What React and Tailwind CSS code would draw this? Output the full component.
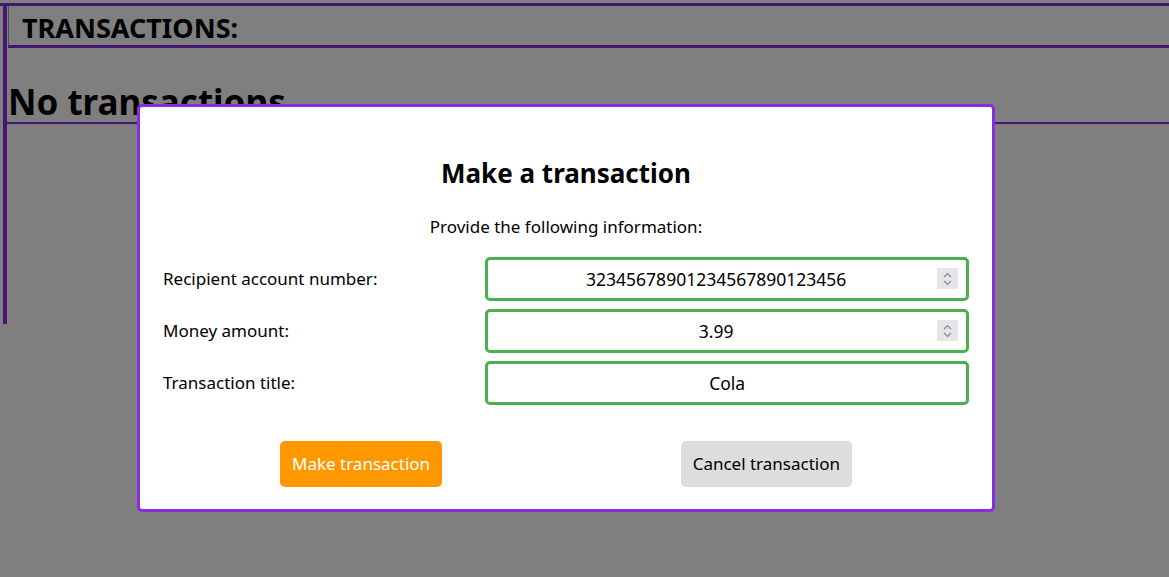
export default function App() {
  const rows = [
    { label: 'Recipient account number:', value: '32345678901234567890123456', spin: true },
    { label: 'Money amount:', value: '3.99', spin: true },
    { label: 'Transaction title:', value: 'Cola', spin: false },
  ];

  return (
    <div className="relative w-[1169px] h-[577px] overflow-hidden bg-white font-['Noto_Sans',sans-serif] text-black">
      {/* Page behind the modal */}
      <div className="border-t-[3px] border-[#8a2be2] mt-[3px]">
        <div className="flex">
          <div className="w-[3px]" />
          <div className="flex-1 border-l-4 border-[#8a2be2] h-[318px]">
            <div className="border-b-[3px] border-[#8a2be2] h-[42px] pl-[13px] ml-px border-l border-l-gray-400">
              <h2 className="text-[27px] font-bold leading-[44px]">TRANSACTIONS:</h2>
            </div>
            <div className="border-b-2 border-[#8a2be2] h-[76px] flex items-end -ml-px">
              <h1 className="text-[35px] font-bold leading-none pl-[2px] mb-[3px]">No transactions</h1>
            </div>
          </div>
        </div>
      </div>

      {/* Overlay */}
      <div className="absolute inset-0 bg-black/50" />

      {/* Modal */}
      <div className="absolute left-[137px] top-[104px] w-[858px] h-[408px] bg-white border-[3px] border-[#8a2be2] rounded-[5px] px-[23px] pt-[48px]">
        <h3 className="text-center text-[26px] font-bold leading-[36px]">Make a transaction</h3>
        <p className="text-center text-[17px] mt-[24px] leading-[24px]">Provide the following information:</p>

        <div className="grid grid-cols-[2fr_3fr] gap-y-[8px] mt-[18px] items-center">
          {rows.map((r) => (
            <div key={r.label} className="contents">
              <span className="text-[17px]">{r.label}</span>
              <div className="relative">
                <input
                  readOnly
                  value={r.value}
                  className={
                    r.spin
                      ? 'w-full h-[44px] border-[3px] border-[#4caf50] rounded-[5px] text-center text-[17.5px] outline-none pl-[2px] pr-[24px]'
                      : 'w-full h-[44px] border-[3px] border-[#4caf50] rounded-[5px] text-center text-[17.5px] outline-none px-[2px]'
                  }
                />
                {r.spin && (
                  <span className="absolute right-[11px] top-[11px] w-[21px] h-[21px] bg-[#e5e5ea] flex flex-col items-center justify-center">
                    <svg width="9" height="16" viewBox="0 0 9 16" fill="none" stroke="#8a8a8a" strokeWidth="1.2">
                      <path d="M1 6 L4.5 2.5 L8 6" />
                      <path d="M1 10 L4.5 13.5 L8 10" />
                    </svg>
                  </span>
                )}
              </div>
            </div>
          ))}
        </div>

        <div className="flex justify-between mt-[36px] px-[117px]">
          <button className="h-[46px] px-[12px] bg-[#ff9800] text-white text-[17px] rounded-[5px]">Make transaction</button>
          <button className="h-[46px] px-[12px] bg-[#dddddd] text-black text-[17px] rounded-[5px]">Cancel transaction</button>
        </div>
      </div>
    </div>
  );
}
